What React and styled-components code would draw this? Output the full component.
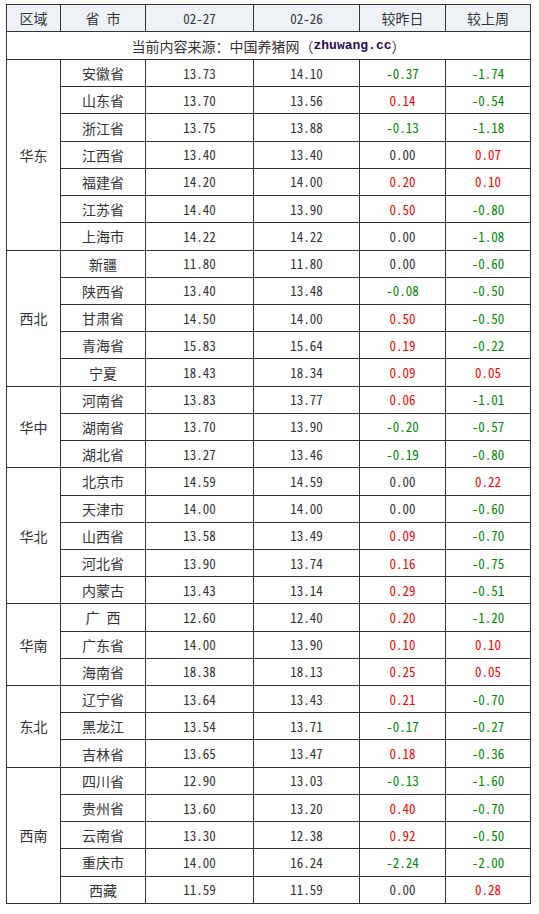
import React from "react";
import styled, { createGlobalStyle } from "styled-components";

const Global = createGlobalStyle`
  html, body { margin: 0; padding: 0; background: #ffffff; }
  body { font-family: "Noto Sans Mono CJK SC", "Noto Sans CJK SC", sans-serif; }
`;

const Page = styled.div`
  padding: 4px 6px;
`;

const Grid = styled.div`
  display: grid;
  width: max-content;
  grid-template-columns: 53px 84px 107px 105px 85px 84px;
  grid-template-rows: 26px 27px repeat(31, 26.23px);
  gap: 1px;
  padding: 1px;
  background: #333333;
  font-size: 13px;
  color: #333333;
`;

const CellBase = styled.div`
  display: flex;
  align-items: center;
  justify-content: center;
  background: #ffffff;
  white-space: pre;
  line-height: 1;
`;

const HeadCell = styled(CellBase)`
  background: #eef2f7;
  font-size: ${(p) => (p.$cjk ? "14px" : "13px")};
`;

const SourceCell = styled(CellBase)`
  grid-column: 1 / -1;
  font-size: 14px;
`;

const Site = styled.b`
  font-family: "Liberation Mono", "DejaVu Sans Mono", monospace;
  font-weight: 700;
  font-size: 13px;
  color: #2a0a55;
`;

const RegionCell = styled(CellBase)`
  grid-row: span ${(p) => p.$span};
  font-size: 14px;
`;

const NameCell = styled(CellBase)`
  font-size: 14px;
`;

const NumCell = styled(CellBase)`
  color: ${(p) => (p.$tone === "up" ? "#ff0000" : p.$tone === "down" ? "#008800" : "#333333")};
`;

const data = [
  ["华东", [
    ["安徽省", "13.73", "14.10", "-0.37", "-1.74"],
    ["山东省", "13.70", "13.56", "0.14", "-0.54"],
    ["浙江省", "13.75", "13.88", "-0.13", "-1.18"],
    ["江西省", "13.40", "13.40", "0.00", "0.07"],
    ["福建省", "14.20", "14.00", "0.20", "0.10"],
    ["江苏省", "14.40", "13.90", "0.50", "-0.80"],
    ["上海市", "14.22", "14.22", "0.00", "-1.08"],
  ]],
  ["西北", [
    ["新疆", "11.80", "11.80", "0.00", "-0.60"],
    ["陕西省", "13.40", "13.48", "-0.08", "-0.50"],
    ["甘肃省", "14.50", "14.00", "0.50", "-0.50"],
    ["青海省", "15.83", "15.64", "0.19", "-0.22"],
    ["宁夏", "18.43", "18.34", "0.09", "0.05"],
  ]],
  ["华中", [
    ["河南省", "13.83", "13.77", "0.06", "-1.01"],
    ["湖南省", "13.70", "13.90", "-0.20", "-0.57"],
    ["湖北省", "13.27", "13.46", "-0.19", "-0.80"],
  ]],
  ["华北", [
    ["北京市", "14.59", "14.59", "0.00", "0.22"],
    ["天津市", "14.00", "14.00", "0.00", "-0.60"],
    ["山西省", "13.58", "13.49", "0.09", "-0.70"],
    ["河北省", "13.90", "13.74", "0.16", "-0.75"],
    ["内蒙古", "13.43", "13.14", "0.29", "-0.51"],
  ]],
  ["华南", [
    ["广 西", "12.60", "12.40", "0.20", "-1.20"],
    ["广东省", "14.00", "13.90", "0.10", "0.10"],
    ["海南省", "18.38", "18.13", "0.25", "0.05"],
  ]],
  ["东北", [
    ["辽宁省", "13.64", "13.43", "0.21", "-0.70"],
    ["黑龙江", "13.54", "13.71", "-0.17", "-0.27"],
    ["吉林省", "13.65", "13.47", "0.18", "-0.36"],
  ]],
  ["西南", [
    ["四川省", "12.90", "13.03", "-0.13", "-1.60"],
    ["贵州省", "13.60", "13.20", "0.40", "-0.70"],
    ["云南省", "13.30", "12.38", "0.92", "-0.50"],
    ["重庆市", "14.00", "16.24", "-2.24", "-2.00"],
    ["西藏", "11.59", "11.59", "0.00", "0.28"],
  ]],
];

const tone = (v) => {
  const n = parseFloat(v);
  if (n > 0) return "up";
  if (n < 0) return "down";
  return "flat";
};

export default function App() {
  return (
    <Page>
      <Global />
      <Grid>
        <HeadCell $cjk>区域</HeadCell>
        <HeadCell $cjk>省 市</HeadCell>
        <HeadCell>02-27</HeadCell>
        <HeadCell>02-26</HeadCell>
        <HeadCell $cjk>较昨日</HeadCell>
        <HeadCell $cjk>较上周</HeadCell>
        <SourceCell>
          当前内容来源：中国养猪网（<Site>zhuwang.cc</Site>）
        </SourceCell>
        {data.map(([region, rows]) => (
          <React.Fragment key={region}>
            <RegionCell $span={rows.length}>{region}</RegionCell>
            {rows.map((r) => (
              <React.Fragment key={r[0]}>
                <NameCell>{r[0]}</NameCell>
                <NumCell>{r[1]}</NumCell>
                <NumCell>{r[2]}</NumCell>
                <NumCell $tone={tone(r[3])}>{r[3]}</NumCell>
                <NumCell $tone={tone(r[4])}>{r[4]}</NumCell>
              </React.Fragment>
            ))}
          </React.Fragment>
        ))}
      </Grid>
    </Page>
  );
}
